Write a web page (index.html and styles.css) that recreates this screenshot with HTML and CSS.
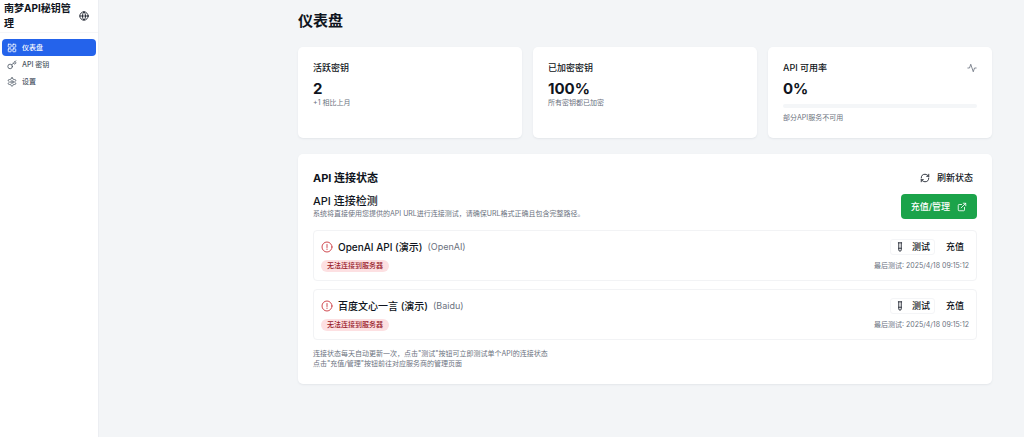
FILE: index.html
```html
<!DOCTYPE html>
<html lang="zh-CN">
<head>
<meta charset="utf-8">
<meta name="viewport" content="width=device-width, initial-scale=1">
<title>仪表盘</title>
<link rel="stylesheet" href="styles.css">
</head>
<body>
<svg class="sprite" aria-hidden="true">
  <symbol id="alert" viewBox="0 0 24 24"><circle cx="12" cy="12" r="10"/><path d="M12 7v6M12 16v1"/></symbol>
  <symbol id="tube" viewBox="0 0 24 24"><path d="M8 2h8M9 2v17a3 3 0 0 0 6 0V2M9 15h6"/></symbol>
</svg>
<div class="app">
  <aside class="sidebar">
    <div class="brand">
      <span class="brand-name">南梦API秘钥管理</span>
      <button class="icon-button" type="button" aria-label="语言">
        <svg class="icon" viewBox="0 0 24 24"><circle cx="12" cy="12" r="10"/><path d="M12 2a14.5 14.5 0 0 0 0 20 14.5 14.5 0 0 0 0-20M2 12h20"/></svg>
      </button>
    </div>
    <nav class="nav">
      <a class="nav-link active" href="#dashboard"><svg class="icon" viewBox="0 0 24 24"><rect x="3" y="3" width="7" height="7" rx="1"/><rect x="14" y="3" width="7" height="7" rx="1"/><rect x="14" y="14" width="7" height="7" rx="1"/><rect x="3" y="14" width="7" height="7" rx="1"/></svg>仪表盘</a>
      <a class="nav-link" href="#keys"><svg class="icon" viewBox="0 0 24 24"><circle cx="7.500" cy="15.500" r="5.500"/><path d="m21 2-9.600 9.600M15.500 7.500l2.300 2.300a1 1 0 0 0 1.400 0l2.100-2.100a1 1 0 0 0 0-1.400L19 4"/></svg>API 密钥</a>
      <a class="nav-link" href="#settings"><svg class="icon" viewBox="0 0 24 24"><path d="M12.220 2h-.44a2 2 0 0 0-2 2v.18a2 2 0 0 1-1 1.730l-.43.25a2 2 0 0 1-2 0l-.15-.08a2 2 0 0 0-2.730.73l-.22.38a2 2 0 0 0 .73 2.730l.15.1a2 2 0 0 1 1 1.720v.51a2 2 0 0 1-1 1.740l-.15.09a2 2 0 0 0-.73 2.730l.22.38a2 2 0 0 0 2.730.73l.15-.08a2 2 0 0 1 2 0l.43.25a2 2 0 0 1 1 1.730V20a2 2 0 0 0 2 2h.44a2 2 0 0 0 2-2v-.18a2 2 0 0 1 1-1.730l.43-.25a2 2 0 0 1 2 0l.15.08a2 2 0 0 0 2.730-.73l.22-.39a2 2 0 0 0-.73-2.730l-.15-.08a2 2 0 0 1-1-1.740v-.5a2 2 0 0 1 1-1.740l.15-.09a2 2 0 0 0 .73-2.730l-.22-.38a2 2 0 0 0-2.730-.73l-.15.08a2 2 0 0 1-2 0l-.43-.25a2 2 0 0 1-1-1.730V4a2 2 0 0 0-2-2z"/><circle cx="12" cy="12" r="3"/></svg>设置</a>
    </nav>
  </aside>
  <main class="main">
    <h1 class="page-title">仪表盘</h1>
    <section class="stats">
      <article class="card">
        <h2 class="card-title">活跃密钥</h2>
        <p class="card-value">2</p>
        <p class="note">+1 相比上月</p>
      </article>
      <article class="card">
        <h2 class="card-title">已加密密钥</h2>
        <p class="card-value">100%</p>
        <p class="note">所有密钥都已加密</p>
      </article>
      <article class="card">
        <h2 class="card-title">API 可用率<svg class="icon muted" viewBox="0 0 24 24"><path d="M22 12h-4l-3 9L9 3l-3 9H2"/></svg></h2>
        <p class="card-value">0%</p>
        <div class="progress" role="progressbar" aria-label="API 可用率" aria-valuenow="0" aria-valuemin="0" aria-valuemax="100"></div>
        <p class="note">部分API服务不可用</p>
      </article>
    </section>
    <section class="card panel">
      <header class="row">
        <h2 class="panel-title">API 连接状态</h2>
        <button class="button refresh" type="button"><svg class="icon" viewBox="0 0 24 24"><path d="M3 12a9 9 0 0 1 9-9 9.750 9.750 0 0 1 6.740 2.740L21 8M21 3v5h-5M21 12a9 9 0 0 1-9 9 9.750 9.750 0 0 1-6.740-2.740L3 16M8 16H3v5"/></svg>刷新状态</button>
      </header>
      <div class="row intro">
        <div>
          <h3 class="section-title">API 连接检测</h3>
          <p class="note">系统将直接使用您提供的API URL进行连接测试，请确保URL格式正确且包含完整路径。</p>
        </div>
        <button class="button primary" type="button">充值/管理<svg class="icon" viewBox="0 0 24 24"><path d="M15 3h6v6M10 14 21 3M18 13v6a2 2 0 0 1-2 2H5a2 2 0 0 1-2-2V8a2 2 0 0 1 2-2h6"/></svg></button>
      </div>
      <ul class="services">
        <li class="service">
          <div class="row">
            <div class="service-name"><svg class="icon alert"><use href="#alert"/></svg><h4 class="name">OpenAI API (演示)</h4><span class="vendor">(OpenAI)</span></div>
            <div class="actions"><button class="button outline" type="button"><svg class="icon"><use href="#tube"/></svg>测试</button><button class="button" type="button">充值</button></div>
          </div>
          <div class="row"><span class="badge">无法连接到服务器</span><span class="note">最后测试: 2025/4/18 09:15:12</span></div>
        </li>
        <li class="service">
          <div class="row">
            <div class="service-name"><svg class="icon alert"><use href="#alert"/></svg><h4 class="name">百度文心一言 (演示)</h4><span class="vendor">(Baidu)</span></div>
            <div class="actions"><button class="button outline" type="button"><svg class="icon"><use href="#tube"/></svg>测试</button><button class="button" type="button">充值</button></div>
          </div>
          <div class="row"><span class="badge">无法连接到服务器</span><span class="note">最后测试: 2025/4/18 09:15:12</span></div>
        </li>
      </ul>
      <div class="hints">
        <p class="note">连接状态每天自动更新一次，点击"测试"按钮可立即测试单个API的连接状态</p>
        <p class="note">点击"充值/管理"按钮前往对应服务商的管理页面</p>
      </div>
    </section>
  </main>
</div>
</body>
</html>
```
FILE: styles.css
```css
* { box-sizing: border-box; }
body, h1, h2, h3, h4, p, ul { margin: 0; padding: 0; }
body { background: #f3f5f7; color: #0f1420; font-family: Inter, "Noto Sans CJK SC", sans-serif; font-size: 9px; line-height: 12px; }
button { font: inherit; color: inherit; background: none; border: 0; padding: 0; cursor: pointer; }
.sprite { display: none; }
.icon { width: 10px; height: 10px; flex: none; fill: none; stroke: currentColor; stroke-width: 2; stroke-linecap: round; stroke-linejoin: round; }
.muted { color: #6b7280; }

.app { display: flex; min-height: 100vh; }
.sidebar { flex: none; width: 99px; background: #fff; border-right: 1px solid #eceef2; }
.brand { display: flex; align-items: center; gap: 6px; padding: 1px 9px 1px 4px; border-bottom: 1px solid #f5f6f8; }
.brand-name { flex: 1; font-size: 10px; line-height: 15px; font-weight: 700; }
.icon-button { display: flex; }
.nav { display: grid; padding: 6px 2px; }
.nav-link { display: flex; align-items: center; gap: 5px; height: 17px; padding: 0 5px; border-radius: 4px; color: #4b5563; font-size: 7px; font-weight: 500; text-decoration: none; }
.nav-link.active { background: #2463eb; color: #fff; }

.main { flex: 1; min-width: 0; padding: 10px 32px 10px 199px; }
.page-title { font-size: 15px; line-height: 22px; font-weight: 700; }
.stats { display: grid; grid-template-columns: repeat(3, 1fr); gap: 11px; margin-top: 15px; }
.card { padding: 15px; background: #fff; border-radius: 5px; box-shadow: 0 1px 2px #e3e6ea; }
.card-title { display: flex; align-items: center; justify-content: space-between; font-size: 9px; line-height: 12px; font-weight: 500; }
.card-value { margin-top: 5px; font-size: 15px; line-height: 19px; font-weight: 700; }
.note { color: #6b7280; font-size: 7px; line-height: 10px; }
.progress { height: 4px; margin: 6px 0 5px; border-radius: 2px; background: #f4f6f8; }

.panel { margin-top: 16px; }
.row { display: flex; align-items: center; justify-content: space-between; }
.panel-title { font-size: 11px; line-height: 18px; font-weight: 700; }
.section-title { font-size: 11px; line-height: 15px; font-weight: 500; }
.intro { margin-top: 7px; }
.button { display: flex; align-items: center; gap: 7px; height: 16px; padding: 0 5px; border-radius: 3px; font-weight: 500; }
.refresh { padding: 0 4px; }
.primary { height: 25px; padding: 0 10px; border-radius: 4px; background: #1ba34a; color: #fff; }
.services { display: grid; gap: 8px; margin-top: 11px; list-style: none; }
.service { display: grid; gap: 5px; padding: 8px 7px; border: 1px solid #f2f3f5; border-radius: 4px; }
.service-name { display: flex; align-items: center; gap: 5px; }
.alert { width: 12px; height: 12px; color: #d04a50; }
.name { font-size: 10px; line-height: 14px; font-weight: 500; }
.vendor { color: #6b7280; font-size: 9px; }
.actions { display: flex; gap: 6px; }
.outline { border: 1px solid #f4f5f7; padding: 0 4px; }
.badge { padding: 0 6px; border-radius: 6px; background: #fde0e2; color: #991b2b; font-size: 7px; line-height: 12px; font-weight: 500; }
.hints { margin-top: 9px; }
```
